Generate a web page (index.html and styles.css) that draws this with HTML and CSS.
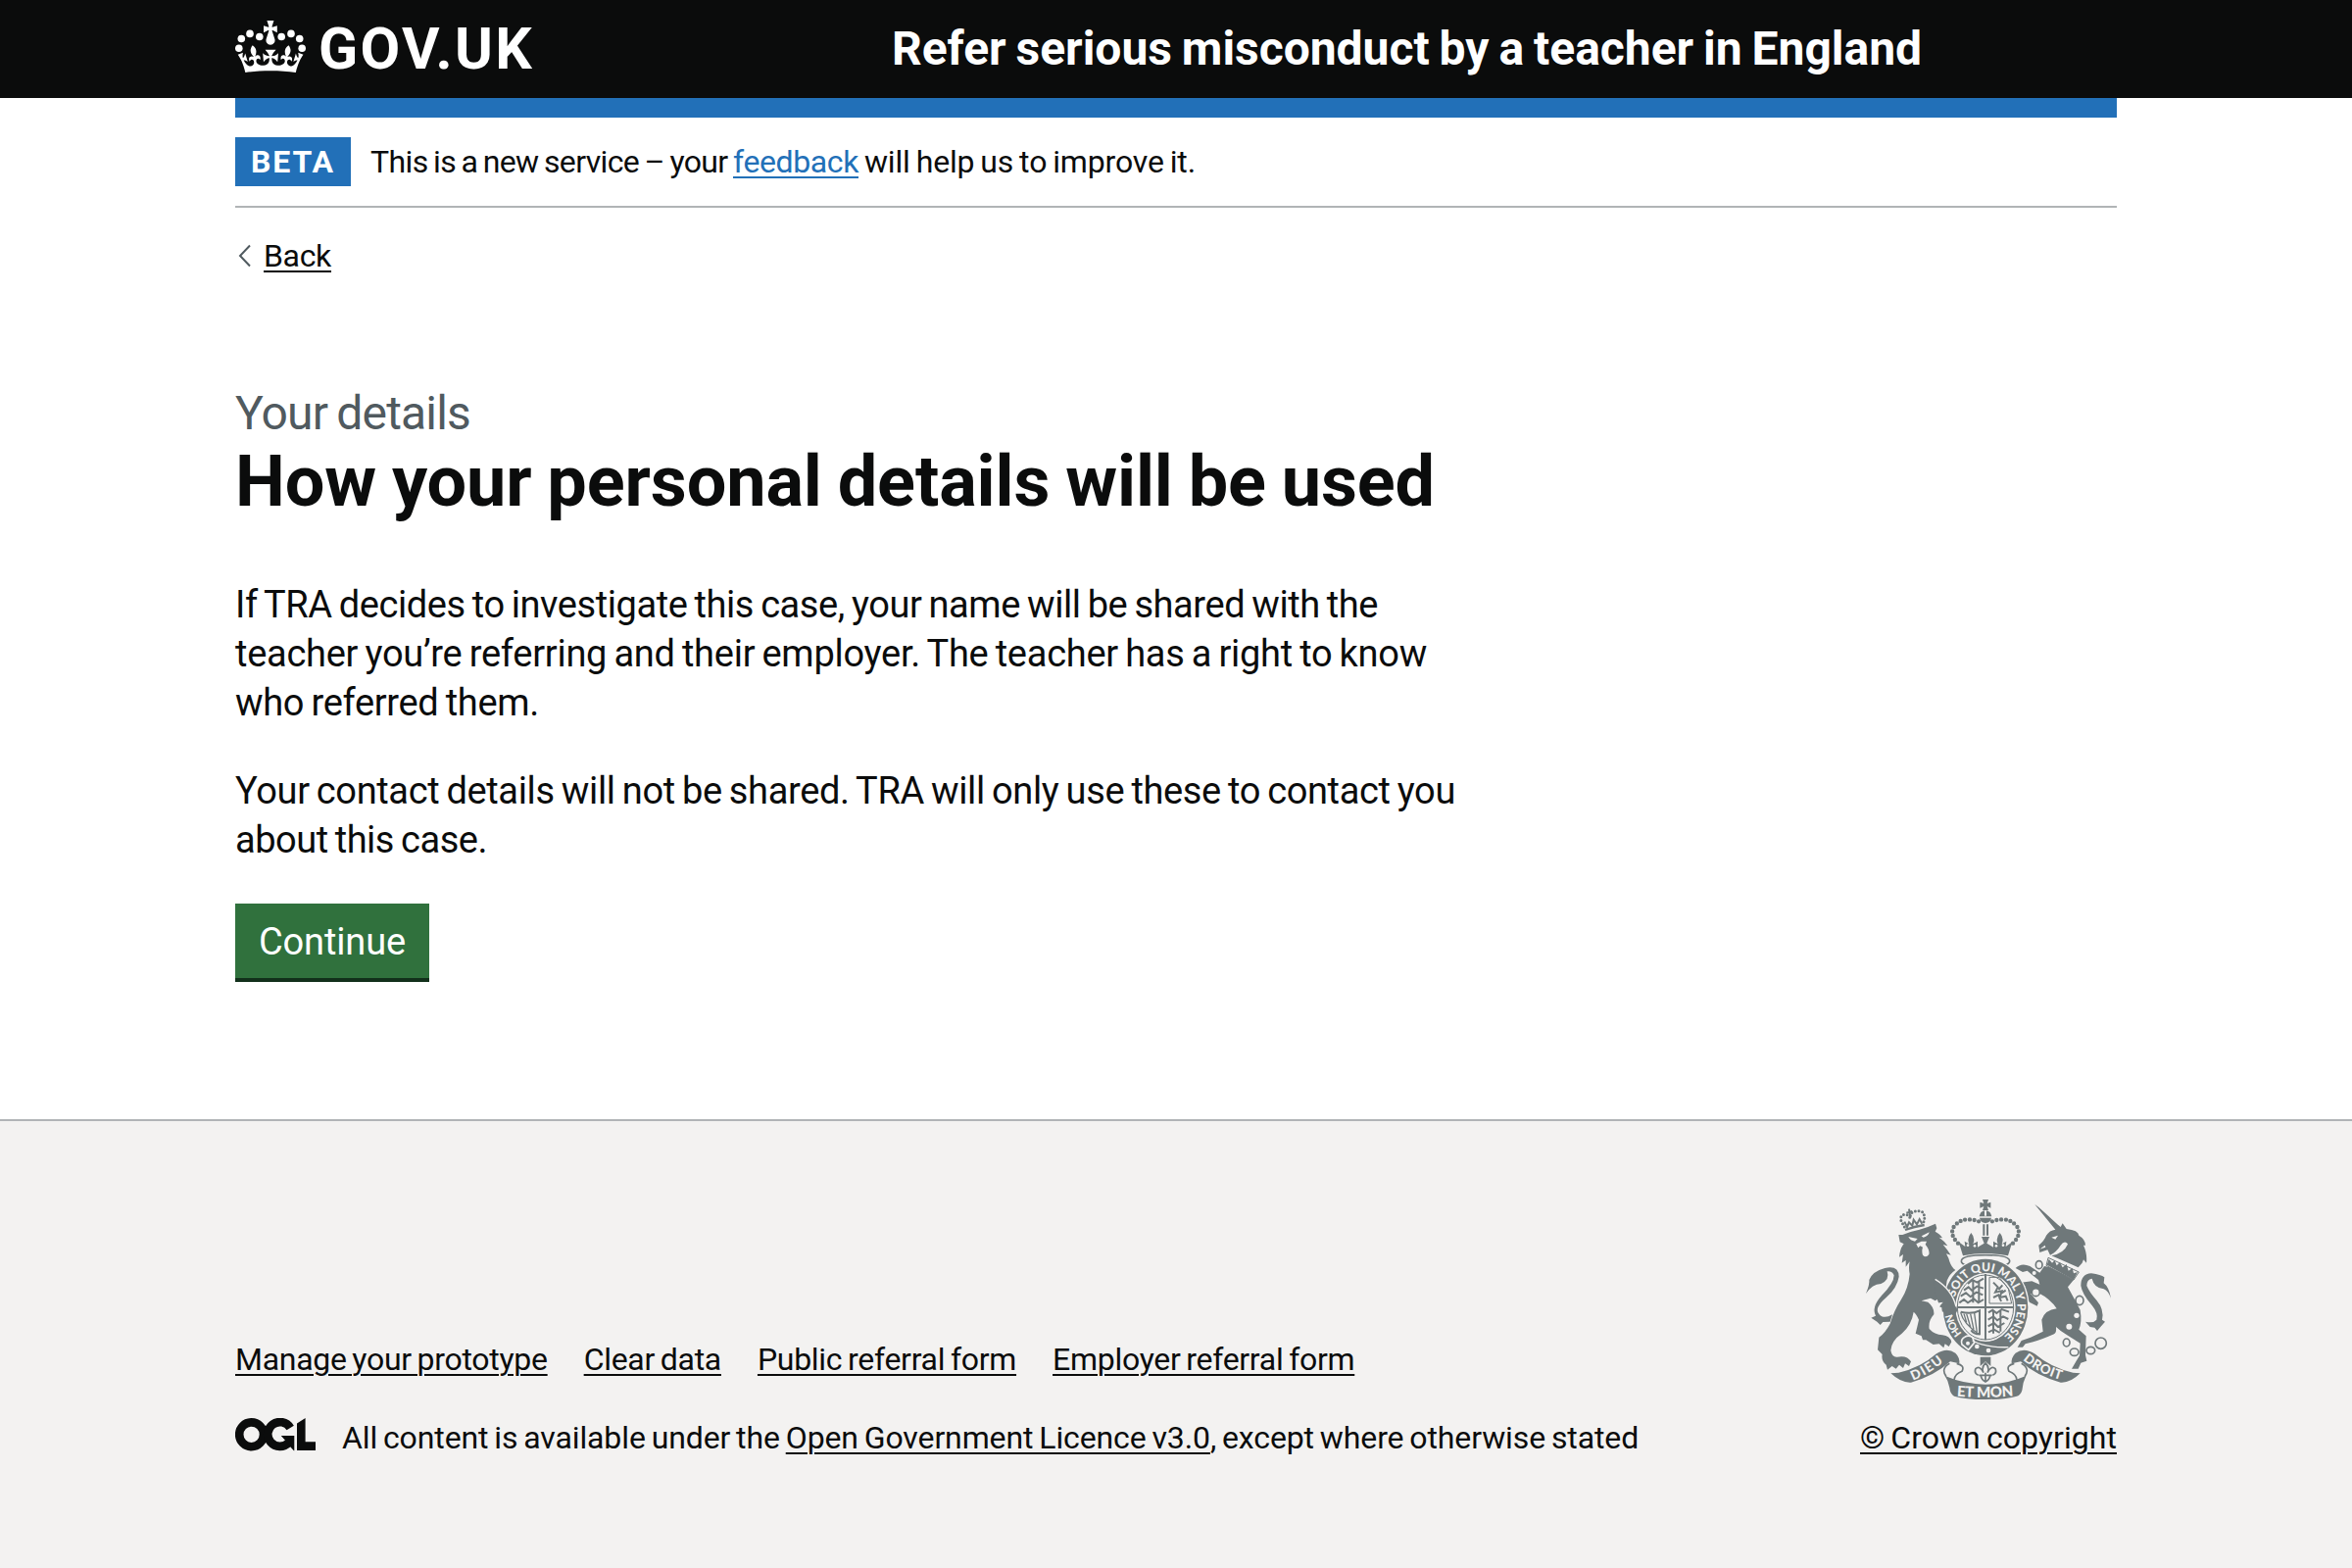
FILE: index.html
```html
<!DOCTYPE html>
<html lang="en">
<head>
<meta charset="utf-8">
<title>How your personal details will be used</title>
<link rel="stylesheet" href="styles.css">
</head>
<body>
<header class="header">
  <div class="container header-row">
    <a class="logo">
      <svg class="crown" viewBox="20 20 72 56" fill="#fff">
        <circle cx="23.8" cy="49.3" r="3.8"/><circle cx="26.3" cy="39.5" r="3.8"/><circle cx="35" cy="34.4" r="3.8"/><circle cx="44.8" cy="37.5" r="3.8"/>
        <circle cx="88.2" cy="49.3" r="3.8"/><circle cx="85.7" cy="39.5" r="3.8"/><circle cx="77" cy="34.4" r="3.8"/><circle cx="67.2" cy="37.5" r="3.8"/>
        <path transform="translate(22.7 21) scale(1.05)" d="M33.1,9.8c.2-.1.3-.3.5-.5l4.6,2.4v-6.8l-4.6,1.5c-.1-.2-.3-.3-.5-.5l1.9-5.9h-6.7l1.9,5.9c-.2.1-.3.3-.5.5l-4.6-1.5v6.8l4.6-2.4c.1.2.3.3.5.5l-2.6,8c-.9,2.8,1.2,5.7,4.1,5.7h0c3,0,5.1-2.9,4.1-5.7l-2.6-8Z"/>
        <path transform="translate(22.7 11) scale(1.05)" d="M37,37.9s-3.4,3.8-4.1,6.1c2.2,0,4.2-.5,6.4-2.8l-.7,8.5c-2-2.8-4.4-4.1-5.7-3.8.1,3.1.5,6.7,5.8,7.2,3.7.3,6.7-1.5,7-3.8.4-2.6-2-4.3-3.7-1.6-1.4-4.5,2.4-6.1,4.9-3.2-1.9-4.5-1.8-7.7,2.4-10.9,3,4,2.6,7.3-1.2,11.1,2.4-1.3,6.2,0,4,4.6-1.2-2.8-3.7-2.2-4.2.2-.3,1.7.7,3.7,3,4.2,1.9.3,4.7-.9,7-5.9-1.3,0-2.4.7-3.9,1.7l2.4-8c.6,2.3,1.4,3.7,2.2,4.5.6-1.6.5-2.8,0-5.3l5,1.8c-2.6,3.6-5.2,8.7-7.3,17.5-7.4-1.1-15.7-1.7-24.5-1.7h0c-8.8,0-17.1.6-24.5,1.7-2.1-8.9-4.7-13.9-7.3-17.5l5-1.8c-.5,2.5-.6,3.7,0,5.3.8-.8,1.6-2.3,2.2-4.5l2.4,8c-1.5-1-2.6-1.7-3.9-1.7,2.3,5,5.2,6.2,7,5.9,2.3-.4,3.3-2.4,3-4.2-.5-2.4-3-3.1-4.2-.2-2.2-4.6,1.6-6,4-4.6-3.7-3.7-4.2-7.1-1.2-11.1,4.2,3.2,4.3,6.4,2.4,10.9,2.5-2.8,6.3-1.3,4.9,3.2-1.8-2.7-4.1-1-3.7,1.6.3,2.3,3.3,4.1,7,3.8,5.4-.5,5.7-4.2,5.8-7.2-1.3-.2-3.7,1-5.7,3.8l-.7-8.5c2.2,2.3,4.2,2.7,6.4,2.8-.7-2.3-4.1-6.1-4.1-6.1h10.6Z"/>
      </svg>
      <span class="wordmark">GOV.UK</span>
    </a>
    <span class="service">Refer serious misconduct by a teacher in England</span>
  </div>
</header>
<div class="container">
  <div class="bar"></div>
  <div class="phase">
    <strong class="tag">BETA</strong>
    <span class="phase-text"><span class="phase-start">This is a new service – your </span><a class="link feedback">feedback</a><span class="phase-end"> will help us to improve it.</span></span>
  </div>
  <div class="back">
    <svg class="chevron" viewBox="0 0 14 24"><path d="M13 1.5 3 12 13 22.5" fill="none" stroke="#505a5f" stroke-width="2"/></svg>
    <a class="link back-link">Back</a>
  </div>
  <main class="main">
    <span class="caption">Your details</span>
    <h1 class="title">How your personal details will be used</h1>
    <p class="body"><span class="line-a">If TRA decides to investigate this case, your name will be shared with the</span><br><span class="line-b">teacher you’re referring and their employer. The teacher has a right to know</span><br><span class="line-c">who referred them.</span></p>
    <p class="body"><span class="line-d">Your contact details will not be shared. TRA will only use these to contact you</span><br><span class="line-e">about this case.</span></p>
    <button class="button">Continue</button>
  </main>
</div>
<footer class="footer">
  <div class="container footer-row">
    <div class="meta">
      <nav class="links">
        <a class="link">Manage your prototype</a>
        <a class="link">Clear data</a>
        <a class="link">Public referral form</a>
        <a class="link">Employer referral form</a>
      </nav>
      <div class="licence">
        <svg class="ogl" viewBox="0 0 82 34" fill="none" stroke="#0b0c0c">
          <circle cx="16.6" cy="16.8" r="12.4" stroke-width="8.6"/>
          <path d="M56.2 10A12.4 12.4 0 1 0 54.5 25.2" stroke-width="8.6"/>
          <path d="M46.8 18H60.3V33.2H59.8L56.4 29.4 50.8 22.6Z" fill="#0b0c0c" stroke="none"/>
          <path d="M63 5.6 71.6 0V24.2H82V33H63Z" fill="#0b0c0c" stroke="none"/>
        </svg>
        <span class="licence-text">All content is available under the <a class="link">Open Government Licence v3.0</a>, except where otherwise stated</span>
      </div>
    </div>
    <div class="copyright">
      <svg class="crest" viewBox="69 69 756 618" fill="#6f787a">
        <defs>
          <path id="garter" d="M345 371A97 110 0 1 1 492 493"/>
          <path id="garter-end" d="M366 482A102 115 0 0 1 336 416"/>
          <path id="dieu" d="M216 626Q266 607 318 562"/>
          <path id="droit" d="M552 563Q606 608 674 625"/>
          <path id="etmon" d="M350 674Q438 681 526 673"/>
        </defs>
        <!-- tails -->
        <path d="M72 360Q84 330 82 318Q92 292 130 282Q172 272 173 308Q168 342 134 372Q96 405 112 422Q126 440 153 424L146 446L124 447L116 456L106 446L88 434L102 428Q88 402 120 366Q158 328 158 304Q152 290 137 292Q146 318 118 330Q90 332 72 360Z"/>
        <path d="M822 374Q814 352 800 346Q770 342 764 314Q748 316 748 336Q756 356 778 380Q802 408 795 440L804 446L792 460L780 474L772 464L758 462L744 446Q768 452 778 440Q784 420 764 396Q734 362 730 336Q730 300 762 298Q792 302 802 310L800 328Q816 340 822 374Z"/>
        <!-- lion -->
        <path d="M172 180L184 180Q206 170 236 164Q264 156 285 146L289 160L284 170Q300 178 306 190L296 188Q314 200 322 214L308 210Q322 226 332 242L318 238Q326 252 328 262Q334 280 346 288Q328 300 320 320L317 342Q338 358 344 382Q346 402 350 412L342 430L332 420L322 428L318 412L306 416L304 402L298 400L308 386L294 388L296 374L284 382L270 374L242 382L262 386Q282 402 280 424Q262 444 266 468Q282 486 306 487Q330 490 334 508L326 522L314 514L310 526L296 514L278 516L256 502L246 502L242 490L224 482Q230 458 234 440Q226 422 218 416Q212 456 182 482Q150 504 148 534Q152 556 168 554Q198 548 210 568L204 582L192 574L186 588L174 578L164 590L152 582L138 593L134 578Q118 566 122 546L108 532L112 494Q130 482 146 452Q158 412 180 378Q202 344 206 300Q202 280 206 262L194 278L194 258L182 266L186 240L174 248Q176 222 188 208L176 202Z"/>
        <path fill="#f3f2f1" d="M202 186L230 192L222 200Q208 198 202 186ZM242 184L266 172Q264 184 248 188ZM226 208L242 200L258 200L254 210Q268 226 265 240Q256 252 246 242Q242 230 246 218L238 214L232 220Z"/>
        <g fill="none" stroke="#6f787a">
          <path d="M190 156L180 138Q176 120 188 118Q202 116 208 130Q206 112 222 108Q250 104 250 120Q254 132 246 146" stroke-width="9" stroke-dasharray="0 11" stroke-linecap="round"/>
          <path d="M192 165Q220 154 251 150" stroke-width="7"/>
          <path d="M204 101L208 128M196 113L214 108" stroke-width="6"/>
          <path d="M190 140L198 156L204 142L214 152L218 134L228 148L236 132L244 146" stroke-width="6"/>
        </g>
        <!-- unicorn -->
        <path d="M589 87Q594 88 658 148L668 156L674 145L686 162Q722 166 724 182Q744 194 744 212L738 212Q750 236 747 266L738 256L734 266L722 280L640 244Q680 236 690 208Q680 196 668 212Q656 232 636 242L628 226L604 234L601 212Q618 198 624 182Q634 166 652 164Z"/>
        <path fill="#f3f2f1" d="M640 188L660 182L652 194ZM604 224L620 212L622 218Z"/>
        <path d="M618 276Q674 284 708 318L690 340Q712 380 728 410Q734 446 724 470L746 490L744 548L748 566L730 572L722 590L702 590L716 566L726 550L728 512L690 488Q668 476 654 462Q656 480 648 484Q612 500 584 508L560 514L552 524L536 524L548 504L576 494L614 476L610 440Q620 410 656 406Q636 376 600 358L576 360L600 388L596 398L572 386L550 352L560 338L546 326L580 322L604 332L600 318L582 304L566 290L552 294L530 282Q548 264 574 276L604 296Z"/>
        <path d="M630 250L724 294L708 318L624 274Z" fill="#f3f2f1" stroke="#6f787a" stroke-width="3"/>
        <path d="M626 272L632 254L642 266L650 258L656 274L666 264L674 280L686 270L692 290L704 282L708 298L720 294L708 318Z"/>
        <g fill="#f3f2f1"><circle cx="717" cy="427" r="8"/><circle cx="694" cy="461" r="9"/><circle cx="587" cy="297" r="6"/></g>
        <g fill="#f3f2f1" stroke="#6f787a" stroke-width="5">
          <ellipse cx="602" cy="272" rx="10" ry="12"/><ellipse cx="592" cy="356" rx="12" ry="12"/><ellipse cx="726" cy="381" rx="12" ry="14"/>
          <ellipse cx="686" cy="510" rx="10" ry="12"/><ellipse cx="710" cy="539" rx="13" ry="11"/><ellipse cx="760" cy="534" rx="13" ry="11"/><circle cx="791" cy="512" r="17"/>
        </g>
        <!-- crown -->
        <g fill="none" stroke="#6f787a">
          <path d="M354 206Q326 178 342 154Q360 132 386 133Q412 134 426 144M522 206Q550 178 534 154Q516 132 490 133Q464 134 450 144" stroke-width="13" stroke-dasharray="0 14" stroke-linecap="round"/>
          <path d="M433 148V182M444 148V182" stroke-width="6"/>
        </g>
        <path d="M429 72H447L443 84L454 80V98L443 93L447 105H429L433 93L421 98V80L433 84ZM419 124Q422 108 435 106V122H441V106Q454 108 457 124ZM420 128H456Q454 142 438 144Q422 142 420 128Z"/>
        <path d="M356 202L376 216L374 200L388 208Q380 190 394 174Q408 190 400 208L414 200L414 218L434 206L426 186H450L442 206L462 218L462 200L476 208Q468 190 482 174Q496 190 488 208L502 200L500 216L520 202L507 244Q438 230 369 244Z"/>
        <g fill="#f3f2f1"><circle cx="384" cy="212" r="4"/><circle cx="405" cy="214" r="4"/><circle cx="471" cy="214" r="4"/><circle cx="492" cy="212" r="4"/></g>
        <path d="M364 260Q366 242 438 242Q510 242 512 260Q512 268 500 272M364 260Q364 268 376 272" fill="none" stroke="#6f787a" stroke-width="5"/>
        <!-- garter and shield -->
        <ellipse cx="438" cy="402" rx="134" ry="151" fill="#f3f2f1"/>
        <ellipse cx="438" cy="402" rx="130" ry="148"/>
        <ellipse cx="438" cy="402" rx="92" ry="105" fill="#f3f2f1"/>
        <ellipse cx="438" cy="402" rx="86" ry="99" fill="none" stroke="#6f787a" stroke-width="3"/>
        <path d="M438 300V502M352 402H524" stroke="#6f787a" stroke-width="6"/>
        <g fill="none" stroke="#6f787a" stroke-width="6">
          <path d="M384 330L398 318L412 326L432 314M372 350L386 340L396 350L412 338L432 344M362 368L378 358L392 370L410 356L430 364M358 388L372 378L384 388L402 376L416 388L432 378M400 318V388M418 320V386"/>
          <path d="M450 310H480L508 345L518 390H450Z" stroke-width="3"/><path d="M462 326L476 340L468 356L488 352L482 372L500 368L506 382M490 334L478 348M462 372L478 364L486 384M500 350L488 358"/>
          <path d="M447 418L460 410L472 420L488 408L510 416M446 440L462 430L474 442L492 430L508 438M446 460L464 450L476 462L496 450M447 478L464 470L482 480M462 410V482M484 410V476"/>
          <path d="M362 416Q396 424 420 412V484Q402 484 394 472"/><path d="M362 418Q370 452 420 486M380 422L392 462M392 422L402 470M404 420L412 478M372 422L380 448" stroke-width="4"/>
        </g>
        <path d="M376 492Q360 500 366 516L386 532L404 510L398 494Q386 486 376 492Z" stroke="#f3f2f1" stroke-width="5"/>
        <path d="M398 504Q440 526 508 524" fill="none" stroke="#f3f2f1" stroke-width="4"/>
        <g fill="#f3f2f1"><circle cx="384" cy="512" r="6"/><circle cx="412" cy="522" r="7"/><circle cx="447" cy="534" r="7"/></g>
        <text class="motto garter"><textPath href="#garter" textLength="396">SOIT QUI MAL Y PENSE</textPath></text>
        <text class="motto garter-end"><textPath href="#garter-end" textLength="68">HON</textPath></text>
        <path d="M280 312Q340 346 352 412L342 430L332 420L322 428L318 412L306 416L304 402L298 400L308 386L294 388L284 360Z"/>
        <path d="M284 316Q336 348 348 400" fill="none" stroke="#f3f2f1" stroke-width="4"/>
        <!-- ribbon -->
        <path d="M148 604L172 602Q238 588 288 544Q320 524 346 542Q360 556 358 574L330 568Q282 612 210 632Q180 634 148 604Z"/>
        <path d="M728 604L706 602Q640 588 588 544Q556 524 530 542Q516 556 518 574L546 568Q594 612 668 632Q698 634 728 604Z"/>
        <path d="M314 612Q438 664 562 612Q552 632 550 656Q546 670 534 674Q500 684 438 684Q376 684 342 674Q330 668 328 648Q324 626 314 612Z"/>
        <g fill="none" stroke="#6f787a" stroke-width="5"><path d="M328 574Q300 590 318 614M350 574Q376 580 366 598Q344 606 342 624M548 574Q576 590 558 614M526 574Q500 580 510 598Q532 606 534 624"/>
          <path d="M438 572Q424 588 432 602Q420 578 408 590Q402 604 416 610M438 572Q452 588 444 602Q456 578 468 590Q474 604 460 610M418 610H458M438 602V630M424 612Q426 624 438 630Q450 624 452 612"/></g>
        <path d="M422 554H454V582L438 568L422 582Z"/>
        <text class="motto"><textPath href="#dieu" textLength="110">DIEU</textPath></text>
        <text class="motto"><textPath href="#droit" textLength="132">DROIT</textPath></text>
        <text class="motto large"><textPath href="#etmon" textLength="174">ET MON</textPath></text>
      </svg>
      <a class="link crown-link">© Crown copyright</a>
    </div>
  </div>
</footer>
</body>
</html>
```
FILE: styles.css
```css
* { box-sizing: border-box; }
body {
  margin: 0;
  min-height: 1600px;
  display: flex;
  flex-direction: column;
  background: #fff;
  color: #0b0c0c;
  font-family: Roboto, "Liberation Sans", sans-serif;
  font-size: 32px;
  line-height: 40px;
  word-spacing: -0.06em;
}
.container { width: 1920px; margin: 0 auto; }

.header { background: #0b0c0c; color: #fff; height: 100px; }
.header-row { display: flex; height: 100px; white-space: nowrap; }
.logo { width: 670px; display: flex; gap: 13px; }
.crown { width: 72px; height: 56px; margin-top: 20px; }
.wordmark { font-size: 59px; font-weight: 700; line-height: 100px; letter-spacing: 2.33px; }
.service { font-size: 48px; font-weight: 700; line-height: 100px; letter-spacing: -0.032px; }

.bar { height: 20px; background: #2270b8; }
.phase { display: flex; gap: 20px; padding: 20px 0; border-bottom: 2px solid #b1b4b6; }
.tag {
  width: 118px;
  height: 50px;
  padding-left: 16px;
  background: #2270b8;
  color: #fff;
  font-weight: 700;
  line-height: 50px;
  letter-spacing: 1.9px;
}
.phase-text { line-height: 50px; white-space: pre; }
.phase-start { letter-spacing: -0.613px; }
.phase-end { letter-spacing: -0.133px; }
.feedback { color: #2270b8; letter-spacing: -0.385px; }
.link { text-decoration: underline; text-decoration-thickness: 2px; text-underline-offset: 4px; }

.back { display: flex; align-items: center; gap: 13px; margin-top: 29px; height: 40px; padding-left: 2px; }
.back-link { letter-spacing: -0.328px; }
.chevron { width: 14px; height: 24px; }

.main { padding-top: 111px; height: 861px; white-space: nowrap; }
.caption { display: block; font-size: 48px; line-height: 60px; color: #505a5f; letter-spacing: -0.822px; }
.title { margin: 0 0 60px; font-size: 72px; line-height: 80px; font-weight: 700; letter-spacing: -0.109px; }
.body { margin: 0 0 40px; font-size: 38px; line-height: 50px; }
.line-a { letter-spacing: -0.424px; }
.line-b { letter-spacing: -0.268px; }
.line-c { letter-spacing: -0.312px; }
.line-d { letter-spacing: -0.36px; }
.line-e { letter-spacing: -0.478px; }
.button {
  display: block;
  width: 198px;
  height: 76px;
  padding: 2px 0 0;
  border: 0;
  background: #30713d;
  box-shadow: 0 4px 0 #12301b;
  color: #fff;
  font: inherit;
  font-size: 38px;
  letter-spacing: -0.145px;
}

.footer { flex: 1; border-top: 2px solid #b1b4b6; background: #f3f2f1; }
.footer-row { display: flex; justify-content: space-between; align-items: flex-end; padding-top: 79px; white-space: nowrap; }
.links { display: flex; gap: 37px; letter-spacing: -0.29px; }
.licence { display: flex; align-items: center; gap: 27px; margin-top: 40px; }
.ogl { width: 82px; height: 34px; margin-top: -6px; }
.licence-text { letter-spacing: -0.118px; }
.copyright { display: flex; flex-direction: column; }
.crown-link { letter-spacing: 0.051px; }
.crest { width: 252px; height: 206px; margin: 0 0 18px 5px; }
.motto { font-family: Lato, sans-serif; font-weight: 900; font-size: 40px; fill: #f3f2f1; letter-spacing: 0; word-spacing: 0; }
.large { font-size: 45px; }
.garter { font-size: 36px; }
.garter-end { font-size: 32px; }
```
